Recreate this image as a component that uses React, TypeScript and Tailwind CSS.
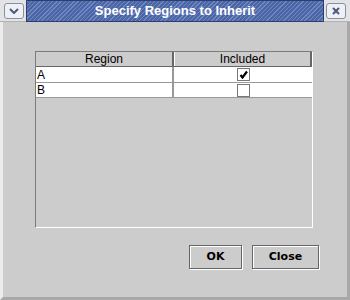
import React from "react";

export default function App() {
  const stripes =
    "repeating-linear-gradient(135deg, #7088bf 0px, #7088bf 1px, #4b66a6 1px, #4b66a6 3px)";
  return (
    <div
      className="w-[350px] h-[300px] bg-[#cccccc] flex flex-col overflow-hidden"
      style={{ fontFamily: '"Liberation Sans", Arial, sans-serif' }}
    >
      {/* title bar */}
      <div className="h-[22px] flex items-center bg-[#e2e3e6] border-b border-[#b0b0b0]">
        <div className="ml-[4px] w-[20px] h-[16px] rounded-[3px] border border-[#8a8fa0] bg-[#eef0f5] flex items-center justify-center">
          <svg width="10" height="6" viewBox="0 0 10 6">
            <path d="M1 1 L5 5 L9 1" stroke="#4a5a80" strokeWidth="2" fill="none" />
          </svg>
        </div>
        <div
          className="ml-[2px] mr-[2px] flex-1 h-[22px] flex items-center justify-center border border-[#2a3e70]"
          style={{ background: stripes }}
        >
          <span className="text-white font-bold text-[13px] leading-none">Specify Regions to Inherit</span>
        </div>
        <div className="mr-[4px] w-[20px] h-[16px] rounded-[3px] border border-[#8a8fa0] bg-[#eef0f5] flex items-center justify-center">
          <svg width="8" height="8" viewBox="0 0 8 8">
            <path d="M1 1 L7 7 M7 1 L1 7" stroke="#4a5a80" strokeWidth="2" />
          </svg>
        </div>
      </div>
      {/* body */}
      <div className="flex-1 flex flex-col border-l-[3px] border-l-[#ececec] border-r-[3px] border-r-[#a8a8a8] border-b-[3px] border-b-[#a8a8a8]">
        <div className="ml-[32px] mt-[29px] w-[278px] h-[177px] border border-[#7a7a7a] border-r-[#ffffff] border-b-[#ffffff] flex flex-col bg-[#cccccc]">
          <div className="flex h-[15px] border-b border-[#666666] text-[12px] leading-none text-black">
            <div className="w-[138px] flex items-center justify-center border-r-[2px] border-r-[#666666]">Region</div>
            <div className="flex-1 flex items-center justify-center border-r-[2px] border-r-[#666666] border-l border-l-white">Included</div>
          </div>
          <div className="flex h-[16px] bg-white border-b border-[#999999] text-[12px] leading-none">
            <div className="w-[138px] flex items-center pl-[1px] border-r-[2px] border-r-[#999999]">A</div>
            <div className="flex-1 flex items-center justify-center">
              <div className="w-[13px] h-[13px] border border-[#777777] bg-white flex items-center justify-center">
                <svg width="9" height="9" viewBox="0 0 9 9">
                  <path d="M1.5 5 L3.5 7.5 L8 1.5" stroke="#000" strokeWidth="2.2" fill="none" />
                </svg>
              </div>
            </div>
          </div>
          <div className="flex h-[15px] bg-white border-b border-[#999999] text-[12px] leading-none">
            <div className="w-[138px] flex items-center pl-[1px] border-r-[2px] border-r-[#999999]">B</div>
            <div className="flex-1 flex items-center justify-center">
              <div className="w-[13px] h-[13px] border border-[#777777] bg-white" />
            </div>
          </div>
        </div>
        <div
          className="flex justify-end gap-[10px] mt-[17px] mr-[28px]"
          style={{ fontFamily: '"DejaVu Sans", sans-serif' }}
        >
          <button className="w-[53px] h-[24px] border border-[#666666] bg-[#cccccc] text-[11px] font-bold shadow-[inset_1px_1px_0_#ffffff,1px_1px_0_#ffffff]">OK</button>
          <button className="w-[67px] h-[24px] border border-[#666666] bg-[#cccccc] text-[11px] font-bold shadow-[inset_1px_1px_0_#ffffff,1px_1px_0_#ffffff]">Close</button>
        </div>
      </div>
    </div>
  );
}
